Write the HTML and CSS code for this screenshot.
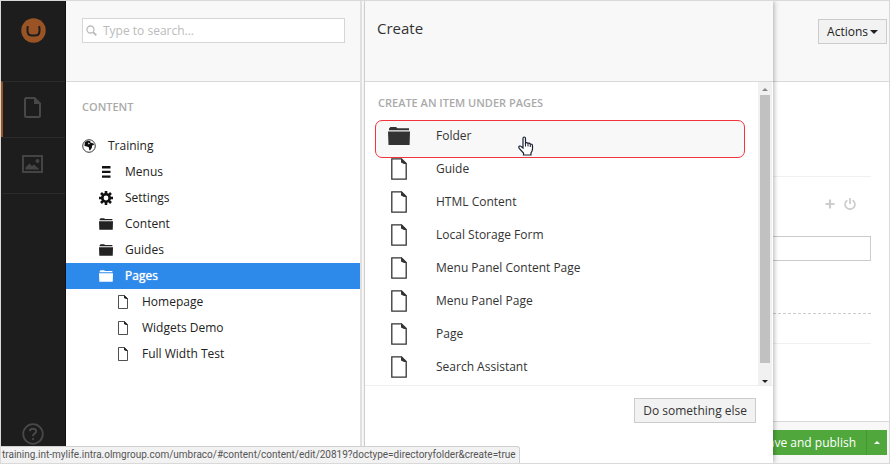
FILE: index.html
```html
<!DOCTYPE html>
<html lang="en">
<head>
<meta charset="utf-8">
<title>Umbraco - Create</title>
<link rel="stylesheet" href="styles.css">
</head>
<body>
<svg class="defs" aria-hidden="true">
  <symbol id="page" viewBox="0 0 16 22"><path d="M.8 .8H10.500L15.200 5.500V21.200H.8Z" fill="#fff" stroke="currentColor" stroke-width="1.300"/><path d="M10 .3L15.700 6H13L10 4.500Z" fill="currentColor"/></symbol>
  <symbol id="smallpage" viewBox="0 0 10 14"><path d="M.5 .5H6.500L9.500 3.500V13.500H.5Z" fill="#fff" stroke="currentColor" stroke-width=".8"/><path d="M6 0L10 4H8L6 3Z" fill="currentColor"/></symbol>
  <symbol id="folder" viewBox="0 0 22 18"><path d="M1 3V1.500L2.500 0H8L9.500 1.300H21V3.200H1ZM0 4.600H22L21.600 18H.5Z" fill="currentColor"/></symbol>
</svg>
<div class="app">
  <nav class="rail">
    <a class="logo" href="#" aria-label="Umbraco"><svg width="25" height="25" viewBox="0 0 25 25"><circle cx="12.500" cy="12.500" r="12.200" fill="#9a5325"/><path d="M6.800 8.200C6 13 6.500 17 9.500 17.300Q12.500 17.700 15.500 17.300C18.500 17 19 13 18.200 8.200" fill="none" stroke="#1d1d1d" stroke-width="2"/></svg></a>
    <a class="section current" href="#" aria-label="Content"><svg width="17" height="21" viewBox="0 0 17 21"><path d="M2.500 1H10.500L16 6.500V18.500Q16 20 14.500 20H2.500Q1 20 1 18.500V2.500Q1 1 2.500 1Z" fill="none" stroke="#484848" stroke-width="2"/><path d="M10 1V7H16Z" fill="#484848"/></svg></a>
    <a class="section" href="#" aria-label="Media"><svg width="21" height="18" viewBox="0 0 21 18"><path d="M1 1H20V17H1Z" fill="none" stroke="#444" stroke-width="2"/><path d="M3.500 14.500V12.500L7.500 8.500L10 11L12 9.500L17.500 14.500Z" fill="#444"/><circle cx="15.500" cy="6" r="2" fill="#444"/></svg></a>
    <a class="help" href="#" aria-label="Help"><svg width="22" height="22" viewBox="0 0 22 22" fill="none" stroke="#484848"><circle cx="11" cy="11" r="9.800" stroke-width="1.800"/><path d="M7.700 8.200Q8 5.700 11 5.700Q14.200 5.700 14.200 8.300Q14.200 9.600 12.500 10.600Q11 11.500 11 13.200" stroke-width="2"/><circle cx="11" cy="16" r=".8" fill="#484848"/></svg></a>
  </nav>

  <aside class="tree">
    <header class="bar search-bar">
      <form class="search">
        <svg width="11" height="11" viewBox="0 0 11 11" fill="none" stroke="#bbb" aria-hidden="true"><circle cx="4.500" cy="4.500" r="3.500" stroke-width="1.300"/><path d="M7 7L10.300 10.300" stroke-width="1.800"/></svg>
        <input type="search" aria-label="Search" placeholder="Type to search...">
      </form>
    </header>
    <h2 class="heading">CONTENT</h2>
    <ul class="nodes">
      <li><a href="#"><svg class="ic" viewBox="0 0 14 14"><circle cx="7" cy="7" r="6.300" fill="#fff" stroke="#222" stroke-width=".9"/><path d="M3 3L5.500 1.800L8.500 2L8 3.300L10 4L11.500 4.500L12 6L10 6.500L10 8.500L8 11.500L7 10.500L7 8.500L5 7.500L2.500 7L2.700 4.500Z" fill="#111"/><path d="M6 3.500L8 4.500L6.500 5.500Z" fill="#fff"/></svg>Training</a></li>
      <li class="l2"><a href="#"><svg class="ic" viewBox="0 0 14 14"><path d="M3 1H11.500V3.400H3ZM3 5.700H11.500V8.100H3ZM3 10.400H11.500V12.800H3Z" fill="#111"/></svg>Menus</a></li>
      <li class="l2"><a href="#"><svg class="ic" viewBox="0 0 14 14"><circle cx="7" cy="7" r="3.700" fill="none" stroke="#111" stroke-width="2.600"/><path d="M7 0V3M7 11V14M0 7H3M11 7H14M2 2L4.200 4.200M9.800 9.800L12 12M12 2L9.800 4.200M4.200 9.800L2 12" stroke="#111" stroke-width="2.600"/></svg>Settings</a></li>
      <li class="l2"><a href="#"><svg class="ic fold"><use href="#folder"/></svg>Content</a></li>
      <li class="l2"><a href="#"><svg class="ic fold"><use href="#folder"/></svg>Guides</a></li>
      <li class="l2 selected"><a href="#"><svg class="ic fold"><use href="#folder"/></svg>Pages</a></li>
      <li class="l3"><a href="#"><svg class="ic"><use href="#smallpage"/></svg>Homepage</a></li>
      <li class="l3"><a href="#"><svg class="ic"><use href="#smallpage"/></svg>Widgets Demo</a></li>
      <li class="l3"><a href="#"><svg class="ic"><use href="#smallpage"/></svg>Full Width Test</a></li>
    </ul>
  </aside>
  <div class="splitter"></div>

  <section class="dialog">
    <header class="bar"><h1>Create</h1></header>
    <div class="scroller">
      <div class="types">
        <h2 class="heading">CREATE AN ITEM UNDER PAGES</h2>
        <ul>
          <li class="hover"><a href="#"><svg class="big folder"><use href="#folder"/></svg><span>Folder</span></a>
            <svg class="pointer" width="16" height="20" viewBox="0 0 16 20"><path d="M5 12V2.500Q5 1 6.200 1Q7.500 1 7.500 2.500V7Q8.500 6 10 7.300Q11.500 6.700 12.300 8.100Q14.500 7.700 14.500 10V13Q14.500 15 13 16.800V19H5.500V17L1.200 12.300Q.3 10.800 1.500 10.100Q2.500 9.700 3.500 10.700Z" fill="#fff" stroke="#182033" stroke-width="1.200"/><path d="M7.500 7V10.500M10 7.500V10.500M12.300 8.300V11" stroke="#182033" fill="none"/></svg></li>
          <li><a href="#"><svg class="big"><use href="#page"/></svg><span>Guide</span></a></li>
          <li><a href="#"><svg class="big"><use href="#page"/></svg><span>HTML Content</span></a></li>
          <li><a href="#"><svg class="big"><use href="#page"/></svg><span>Local Storage Form</span></a></li>
          <li><a href="#"><svg class="big"><use href="#page"/></svg><span>Menu Panel Content Page</span></a></li>
          <li><a href="#"><svg class="big"><use href="#page"/></svg><span>Menu Panel Page</span></a></li>
          <li><a href="#"><svg class="big"><use href="#page"/></svg><span>Page</span></a></li>
          <li><a href="#"><svg class="big"><use href="#page"/></svg><span>Search Assistant</span></a></li>
        </ul>
      </div>
      <div class="scrollbar"><i class="up"></i><div class="thumb"></div><i class="down"></i></div>
    </div>
    <footer><button class="btn" type="button">Do something else</button></footer>
  </section>

  <main class="editor">
    <header class="bar"><button class="btn actions" type="button">Actions<i class="down"></i></button></header>
    <div class="form">
      <div class="group">
        <div class="tools">
          <svg width="10" height="10" viewBox="0 0 10 10"><path d="M5 0.500V9.500M.5 5H9.500" stroke="#ccc" stroke-width="2.200"/></svg>
          <svg width="12" height="12" viewBox="0 0 12 12" fill="none" stroke="#ccc" stroke-width="1.700"><path d="M3.300 2.200A4.900 4.900 0 1 0 8.700 2.200M6 0V6"/></svg>
        </div>
        <input type="text" aria-label="Value">
        <hr>
      </div>
    </div>
    <footer><button class="save" type="button">Save and publish</button><button class="save more" type="button" aria-label="More publish options"><i class="up"></i></button></footer>
  </main>
  <div class="status">training.int-mylife.intra.olmgroup.com/umbraco/#content/content/edit/20819?doctype=directoryfolder&amp;create=true</div>
</div>
</body>
</html>
```
FILE: styles.css
```css
* { box-sizing: border-box; }
body { margin: 0; font: 12px/16px "Open Sans", sans-serif; color: #333; }
h1, h2, ul { margin: 0; padding: 0; font-weight: normal; }
ul { list-style: none; }
a { color: inherit; text-decoration: none; }
svg { display: block; flex: none; }
button, input { font: inherit; color: inherit; border-radius: 0; }
.defs { position: absolute; width: 0; height: 0; }

.app {
  position: relative;
  display: grid;
  grid-template-columns: 65px 294px 5px 408px minmax(0, 1fr);
  height: 100vh;
  border: 1px solid #d9d9d9;
  overflow: hidden;
  background: #fff;
}
.bar { height: 81px; flex: none; background: #f8f8f8; border-bottom: 1px solid #d9d9d9; }
.heading { font-size: 11px; line-height: 16px; font-weight: 600; color: #aaa; }

.rail { display: flex; flex-direction: column; background: #1d1d1d; padding-bottom: 18px; border-right: 1px solid #111; }
.logo { display: flex; justify-content: center; height: 80px; padding-top: 17px; }
.section { display: flex; align-items: center; justify-content: center; height: 56px; border-top: 1px solid #2b2b2b; border-left: 2px solid transparent; padding: 0 4px 4px 0; }
.section + .section { height: 57px; border-bottom: 1px solid #2b2b2b; }
.section.current { border-left-color: #9a5325; }
.help { display: flex; justify-content: center; margin-top: auto; }

.search-bar { padding: 17px 15px 0 16px; }
.search { display: flex; align-items: center; gap: 6px; height: 25px; padding-left: 3px; background: #fff; border: 1px solid #d6d6d6; }
.search input { flex: 1; min-width: 0; padding: 0; border: 0; background: none; outline: 0; }
.search input::placeholder { color: #bbb; }
.tree .heading { padding: 17px 16px 0; }
.nodes { padding-top: 18px; }
.nodes a { display: flex; align-items: center; gap: 12px; height: 26px; padding-left: 16px; color: #222; }
.nodes .l2 a { padding-left: 33px; }
.nodes .l3 a { padding-left: 50px; }
.nodes .selected a { color: #fff; background: #2e8aea; text-shadow: 0 0 1px #fff; }
.ic { width: 14px; height: 14px; color: #222; }
.fold { height: 12px; }
.selected .ic { color: #fff; }
.splitter { border: solid #e2e2e2; border-width: 0 1px 0 2px; }

.dialog { position: relative; z-index: 1; display: flex; flex-direction: column; min-height: 0; background: #fff; box-shadow: 1px 0 5px rgba(0, 0, 0, .3); }
.dialog h1 { font-size: 15px; line-height: 20px; padding: 17px 12px 0; }
.scroller { flex: 1; display: flex; min-height: 0; }
.types { flex: 1; padding: 13px 13px 0 10px; overflow: hidden; }
.types .heading { padding-left: 3px; }
.types ul { padding-top: 8px; }
.types li { position: relative; height: 33px; }
.types a { position: relative; z-index: 1; display: grid; grid-template-columns: 48px 1fr; justify-items: center; align-items: center; column-gap: 13px; height: 33px; }
.types span { justify-self: start; }
.types .hover::before { content: ""; position: absolute; inset: 1px 0 -6px; border: 1px solid #f2353c; border-radius: 7px; background: #f8f8f8; }
.big { width: 16px; height: 22px; color: #333; }
.big.folder { width: 22px; height: 18px; }
.pointer { position: absolute; z-index: 2; left: 143px; top: 17px; }
.scrollbar { display: flex; flex-direction: column; align-items: center; width: 14px; margin-right: 1px; padding: 6px 0 2px; gap: 4px; background: #f1f1f1; }
.thumb { width: 10px; flex: 1; margin-bottom: 13px; background: #c1c1c1; }
.up, .down { flex: none; border: 3px solid transparent; }
.up { border-top: 0; border-bottom-color: #888; }
.down { border-bottom: 0; border-top-color: #222; }
.dialog footer { display: flex; justify-content: flex-end; height: 78px; padding: 12px 17px 0; border-top: 1px solid #eee; }
.btn { height: 25px; padding: 0 8px; background: #f2f2f2; border: 1px solid #ccc; }

.editor { display: flex; flex-direction: column; min-width: 0; background: #fff; }
.editor .bar { display: flex; justify-content: flex-end; padding: 18px 2px 0; }
.actions { display: flex; align-items: center; gap: 2px; color: #222; }
.actions .down { border-width: 4px 4px 0; }
.form { flex: 1; padding: 94px 18px 0 0; }
.group { border: solid #f0f0f0; border-width: 1px 0; height: 168px; padding-top: 20px; }
.tools { display: flex; justify-content: flex-end; align-items: center; gap: 9px; height: 14px; padding-right: 15px; }
.group input { display: block; width: 100%; height: 25px; margin-top: 25px; border: 1px solid #ccc; border-left: 0; }
.group hr { height: 0; margin: 52px 0 0; border: 0; border-top: 1px dashed #ccc; }
.editor footer { display: flex; justify-content: flex-end; height: 42px; padding: 8px 2px 0 0; background: #f8f8f8; border-top: 1px solid #d9d9d9; }
.save { flex: none; height: 25px; padding: 0 10px; border: 0; background: #50a83c; color: #fff; }
.more { display: grid; place-items: center; width: 21px; padding: 0; border-left: 1px solid #459634; }
.more .up { border-bottom-color: #fff; }

.status { position: absolute; z-index: 3; left: 0; bottom: 0; height: 17px; padding: 0 3px 0 1px; font: 10px/16px Roboto, sans-serif; color: #555; white-space: nowrap; background: #f2f2f2; border: solid #d0d0d0; border-width: 1px 1px 0 0; border-radius: 0 3px 0 0; }
```
